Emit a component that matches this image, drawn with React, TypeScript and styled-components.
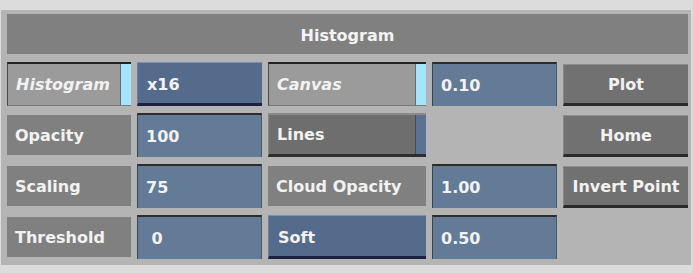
import React from 'react'
import styled, { createGlobalStyle } from 'styled-components'

const GlobalStyle = createGlobalStyle`
  html, body {
    margin: 0;
    padding: 0;
    background: #dcdcdc;
  }
  body {
    font-family: "DejaVu Sans", "Liberation Sans", sans-serif;
    -webkit-font-smoothing: antialiased;
  }
`

const Panel = styled.div`
  margin: 10px 0 0 1px;
  width: 690px;
  height: 255px;
  box-sizing: border-box;
  padding: 4px 3px 6px 6px;
  background: #b4b4b4;
  display: flex;
  flex-direction: column;
  gap: 8px;
`

const TitleBar = styled.div`
  height: 40px;
  padding-top: 2px;
  box-sizing: border-box;
  background: #808080;
  color: #f4f4f4;
  font-size: 16px;
  font-weight: bold;
  display: flex;
  align-items: center;
  justify-content: center;
`

const Grid = styled.div`
  display: grid;
  grid-template-columns: 124px 125px 158px 125px 125px;
  grid-template-rows: repeat(4, 44px);
  column-gap: 6px;
  row-gap: 7px;
`

const Cell = styled.div<{ $italic?: boolean }>`
  box-sizing: border-box;
  display: flex;
  align-items: center;
  padding-left: 8px;
  color: #f2f2f2;
  font-size: 16px;
  font-weight: bold;
  font-style: ${p => (p.$italic ? 'italic' : 'normal')};
  white-space: nowrap;
  position: relative;
`

const Label = styled(Cell)`
  background: #808080;
  margin: 2px 0 0;
  height: 40px;
`

const NumField = styled(Cell)`
  background: #637b97;
  border-top: 2px solid #2c2c2c;
  border-left: 1px solid #3c4450;
  border-right: 1px solid #4a5566;
  padding-left: 8px;
`

const Menu = styled(Cell)`
  background: #556b8c;
  border-top: 1px solid #7d90b0;
  border-bottom: 3px solid #1d2140;
  border-left: 1px solid #6e80a0;
  padding-left: 9px;
  padding-top: 2px;
`

const Toggle = styled(Cell)<{ $strip: string; $dark?: boolean }>`
  background: ${p => (p.$dark ? '#6e6e6e' : '#9b9b9b')};
  border-top: 2px solid ${p => (p.$dark ? '#8a8a8a' : '#232323')};
  border-bottom: ${p => (p.$dark ? '3px solid #2e2e2e' : '1px solid #7a7a7a')};
  border-left: 1px solid ${p => (p.$dark ? '#888' : '#4a4a4a')};
  padding-right: 12px;
  &::after {
    content: '';
    position: absolute;
    top: 0;
    right: 0;
    bottom: 0;
    width: 10px;
    background: ${p => p.$strip};
    border-left: 1px solid ${p => (p.$dark ? '#4a4a4a' : '#6a6a6a')};
  }
`

const Button = styled(Cell)`
  justify-content: center;
  padding-left: 0;
  background: #717171;
  border-top: 1px solid #8c8c8c;
  border-left: 1px solid #888;
  border-bottom: 3px solid #2a2a2a;
  margin-top: 2px;
`

const Empty = styled.div``

export default function App() {
  return (
    <>
      <GlobalStyle />
      <Panel>
        <TitleBar>Histogram</TitleBar>
        <Grid>
          <Toggle $italic $strip="#a3e6fb">Histogram</Toggle>
          <Menu>x16</Menu>
          <Toggle $italic $strip="#a3e6fb">Canvas</Toggle>
          <NumField>0.10</NumField>
          <Button>Plot</Button>

          <Label>Opacity</Label>
          <NumField>100</NumField>
          <Toggle $dark $strip="#5b7294">Lines</Toggle>
          <Empty />
          <Button>Home</Button>

          <Label>Scaling</Label>
          <NumField>75</NumField>
          <Label>Cloud Opacity</Label>
          <NumField>1.00</NumField>
          <Button>Invert Point</Button>

          <Label>Threshold</Label>
          <NumField>&nbsp;0</NumField>
          <Menu>Soft</Menu>
          <NumField>0.50</NumField>
          <Empty />
        </Grid>
      </Panel>
    </>
  )
}
